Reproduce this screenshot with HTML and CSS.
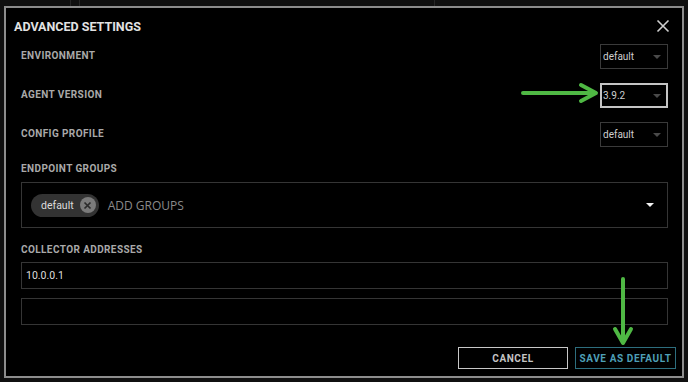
FILE: index.html
```html
<!DOCTYPE html>
<html>
<head>
<meta charset="utf-8">
<link rel="stylesheet" href="styles.css">
</head>
<body>
<div class="screen">
  <div class="backdrop-strip">
    <span class="bd-line bd-a"></span>
    <span class="bd-line bd-b"></span>
    <span class="bd-line bd-c"></span>
  </div>
  <div class="modal">
    <div class="modal-header">
      <h1 class="title">ADVANCED SETTINGS</h1>
      <button class="close" aria-label="Close">
        <svg width="14" height="14" viewBox="0 0 14 14"><path d="M1.5 1.5 L12.5 12.5 M12.5 1.5 L1.5 12.5" stroke="#cfcfcf" stroke-width="1.6" fill="none"/></svg>
      </button>
    </div>

    <div class="row">
      <span class="label">ENVIRONMENT</span>
      <div class="select"><span>default</span><span class="caret"></span></div>
    </div>
    <div class="row">
      <span class="label">AGENT VERSION</span>
      <div class="select select-active"><span>3.9.2</span><span class="caret"></span></div>
    </div>
    <div class="row">
      <span class="label">CONFIG PROFILE</span>
      <div class="select"><span>default</span><span class="caret"></span></div>
    </div>

    <div class="label block-label first-block">ENDPOINT GROUPS</div>
    <div class="multi">
      <div class="chip">
        <span class="chip-text">default</span>
        <span class="chip-x">
          <svg width="9" height="9" viewBox="0 0 9 9"><path d="M1.5 1.5 L7.5 7.5 M7.5 1.5 L1.5 7.5" stroke="#2b2b2b" stroke-width="1.7" fill="none"/></svg>
        </span>
      </div>
      <span class="placeholder">ADD GROUPS</span>
      <span class="multi-caret"></span>
    </div>

    <div class="label block-label second-block">COLLECTOR ADDRESSES</div>
    <div class="input">10.0.0.1</div>
    <div class="input input-second"></div>

    <div class="actions">
      <button class="btn btn-cancel">CANCEL</button>
      <button class="btn btn-save">SAVE AS DEFAULT</button>
    </div>
  </div>

  <svg class="annot annot-right" width="84" height="26" viewBox="0 0 84 26">
    <path d="M3 13 H75 M61 5 L76 13 L61 21" stroke="#4fb844" stroke-width="4" stroke-linecap="round" stroke-linejoin="round" fill="none"/>
  </svg>
  <svg class="annot annot-down" width="26" height="74" viewBox="0 0 26 74">
    <path d="M13 3 V66 M5 53 L13 67 L21 53" stroke="#4fb844" stroke-width="4" stroke-linecap="round" stroke-linejoin="round" fill="none"/>
  </svg>
</div>
</body>
</html>
```

FILE: styles.css
```css
* { box-sizing: border-box; }

html, body {
  margin: 0;
  padding: 0;
  background: #101010;
}

.screen {
  position: relative;
  width: 688px;
  height: 382px;
  overflow: hidden;
  padding: 0 4px;
  background: #101010;
}

.backdrop-strip {
  position: relative;
  height: 6px;
}
.bd-line {
  position: absolute;
  top: 0;
  width: 1px;
  height: 6px;
  background: #262626;
}
.bd-a { left: 66px; }
.bd-b { left: 75px; }
.bd-c { left: 430px; }

.modal {
  width: 680px;
  height: 372px;
  border: 2px solid #8d8d8d;
  background: #000;
  padding: 0 14px 7px 15px;
  display: flex;
  flex-direction: column;
}

.modal-header {
  height: 36px;
  display: flex;
  align-items: center;
  justify-content: space-between;
  margin-left: -7px;
}

.title {
  margin: 0;
  font-family: Roboto, "Liberation Sans", sans-serif;
  font-weight: bold;
  font-size: 12.5px;
  letter-spacing: 0;
  color: #e2e2e2;
}

.close {
  background: none;
  border: 0;
  padding: 0;
  margin-right: -2px;
  width: 14px;
  height: 14px;
  display: flex;
}

.row {
  height: 25px;
  display: flex;
  align-items: center;
  justify-content: space-between;
}
.row + .row { margin-top: 14px; }

.label {
  font-family: Roboto, "Liberation Sans", sans-serif;
  font-weight: bold;
  font-size: 10px;
  letter-spacing: 0.4px;
  color: #a9a9a9;
  padding-bottom: 3px;
  white-space: nowrap;
}

.select {
  width: 68px;
  height: 25px;
  border: 1px solid #3a3a3a;
  display: flex;
  align-items: center;
  justify-content: space-between;
  padding: 0 6px 0 2px;
  font-family: Roboto, "Liberation Sans", sans-serif;
  font-size: 10px;
  color: #cfcfcf;
}
.select-active {
  border: 2px solid #c4c4c4;
  padding-left: 1px;
  padding-right: 5px;
}
.caret {
  width: 0;
  height: 0;
  border-left: 4px solid transparent;
  border-right: 4px solid transparent;
  border-top: 4px solid #4a4a4a;
}

.block-label {
  height: 12px;
  line-height: 12px;
  padding-bottom: 0;
}
.first-block { margin-top: 16px; margin-bottom: 7px; }
.second-block { margin-top: 16px; margin-bottom: 6px; }

.multi {
  height: 46px;
  border: 1px solid #353535;
  display: flex;
  align-items: center;
  padding: 0 13px 0 9px;
}
.chip {
  height: 23px;
  border-radius: 12px;
  background: #333;
  display: flex;
  align-items: center;
  padding: 0 3px 0 10px;
}
.chip-text {
  font-family: Roboto, "Liberation Sans", sans-serif;
  font-size: 10.5px;
  color: #dcdcdc;
  margin-right: 6px;
}
.chip-x {
  width: 16px;
  height: 16px;
  border-radius: 50%;
  background: #7b7b7b;
  display: flex;
  align-items: center;
  justify-content: center;
}
.placeholder {
  margin-left: 9px;
  font-family: "Open Sans", "Liberation Sans", sans-serif;
  font-size: 12px;
  color: #8a8a8a;
  flex: 1;
}
.multi-caret {
  width: 0;
  height: 0;
  border-left: 4px solid transparent;
  border-right: 4px solid transparent;
  border-top: 4px solid #f2f2f2;
}

.input {
  height: 27px;
  border: 1px solid #353535;
  display: flex;
  align-items: center;
  padding-left: 4px;
  font-family: Roboto, "Liberation Sans", sans-serif;
  font-size: 10.5px;
  color: #dedede;
}
.input-second { margin-top: 9px; }

.actions {
  margin-top: 22px;
  margin-right: -8px;
  display: flex;
  justify-content: flex-end;
  gap: 7px;
}
.btn {
  height: 22px;
  background: #000;
  font-family: Roboto, "Liberation Sans", sans-serif;
  font-weight: bold;
  font-size: 10px;
  letter-spacing: 0.6px;
  white-space: nowrap;
  padding: 0;
  display: flex;
  align-items: center;
  justify-content: center;
}
.btn-cancel {
  width: 110px;
  border: 1.5px solid #c8c8c8;
  color: #c4c4c4;
}
.btn-save {
  width: 101px;
  border: 1.5px solid #2d6e7e;
  color: #4e9fb6;
}

.annot {
  position: absolute;
  display: block;
}
.annot-right { left: 520px; top: 80px; }
.annot-down { left: 610px; top: 276px; }
```
